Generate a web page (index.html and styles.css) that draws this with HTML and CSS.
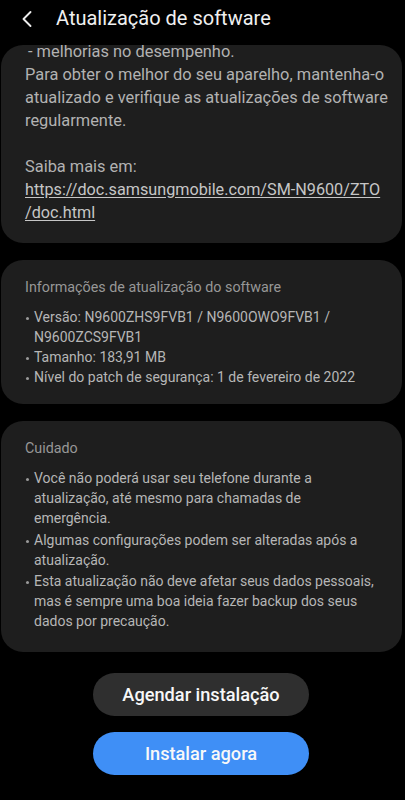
FILE: index.html
```html
<!DOCTYPE html>
<html lang="pt-BR">
<head>
<meta charset="utf-8">
<title>Atualização de software</title>
<link rel="stylesheet" href="styles.css">
</head>
<body>
<div class="screen">
  <header class="appbar">
    <span class="back" aria-label="Voltar">
      <svg width="12" height="18" viewBox="0 0 12 18"><path d="M9.5 2 L2.5 9 L9.5 16" fill="none" stroke="#ececec" stroke-width="1.9" stroke-linecap="round" stroke-linejoin="round"/></svg>
    </span>
    <h1 class="title">Atualização de software</h1>
  </header>

  <main class="content">
    <section class="card card-notes">
      <p class="notes-first">- melhorias no desempenho.</p>
      <p>Para obter o melhor do seu aparelho, mantenha-o atualizado e verifique as atualizações de software regularmente.</p>
      <p class="notes-gap">Saiba mais em:<br><a class="link" href="#">https://doc.samsungmobile.com/SM-N9600/ZTO<br>/doc.html</a></p>
    </section>

    <section class="card card-info">
      <h2 class="card-title">Informações de atualização do software</h2>
      <ul class="bullets">
        <li>Versão: N9600ZHS9FVB1 / N9600OWO9FVB1 / N9600ZCS9FVB1</li>
        <li>Tamanho: 183,91 MB</li>
        <li>Nível do patch de segurança: 1 de fevereiro de 2022</li>
      </ul>
    </section>

    <section class="card card-warn">
      <h2 class="card-title">Cuidado</h2>
      <ul class="bullets spaced">
        <li>Você não poderá usar seu telefone durante a atualização, até mesmo para chamadas de<br>emergência.</li>
        <li>Algumas configurações podem ser alteradas após a atualização.</li>
        <li>Esta atualização não deve afetar seus dados pessoais, mas é sempre uma boa ideia fazer backup dos seus dados por precaução.</li>
      </ul>
    </section>

    <div class="actions">
      <button class="btn btn-secondary">Agendar instalação</button>
      <button class="btn btn-primary">Instalar agora</button>
    </div>
  </main>
</div>
</body>
</html>
```

FILE: styles.css
```css
* { box-sizing: border-box; }

html, body {
  margin: 0;
  padding: 0;
  background: #000;
}

body {
  font-family: Roboto, "Noto Sans", "Liberation Sans", sans-serif;
  color: #b4b4b4;
  width: 405px;
  height: 800px;
  overflow: hidden;
}

.screen {
  display: flex;
  flex-direction: column;
  height: 800px;
}

.appbar {
  height: 45px;
  display: flex;
  align-items: flex-start;
  padding-left: 21px;
  background: #000;
}

.back {
  display: flex;
  width: 35px;
  padding-top: 10px;
}

.title {
  margin: 0;
  padding-top: 5px;
  font-size: 20px;
  font-weight: 400;
  line-height: 26px;
  color: #f0f0f0;
  letter-spacing: 0;
}

.content {
  display: flex;
  flex-direction: column;
  padding: 0 3px 0 1px;
}

.card {
  background: #1e1e1e;
  border-radius: 22px;
  overflow: hidden;
}

.card + .card { margin-top: 17px; }

.card-notes {
  height: 198px;
  padding: 0 14px 0 24px;
  font-size: 16.4px;
  line-height: 23px;
  color: #b2b2b2;
}

.card-notes p { margin: 0; }

.notes-first {
  margin-top: -5px !important;
  padding-left: 3px;
}

.notes-gap { margin-top: 23px !important; }

.link {
  color: #c6c6c6;
  font-size: 16.2px;
  text-decoration: underline;
  text-underline-offset: 2px;
}

.card-info {
  height: 144px;
  padding: 17px 18px 0 24px;
}

.card-warn {
  height: 231px;
  padding: 17px 16px 0 24px;
}

.card-title {
  margin: 0 0 10px;
  font-size: 14.3px;
  font-weight: 400;
  line-height: 20px;
  color: #979797;
}

.bullets {
  margin: 0;
  padding: 0;
  list-style: none;
  font-size: 14px;
  line-height: 20px;
  color: #b6b6b6;
}

.bullets li {
  display: flex;
}

.bullets li::before {
  content: "";
  flex: 0 0 3px;
  width: 3px;
  height: 3px;
  margin: 10px 5px 0 1px;
  border-radius: 50%;
  background: #9a9a9a;
}

.bullets.spaced li + li { margin-top: 1.5px; }

.actions {
  display: flex;
  flex-direction: column;
  align-items: center;
  gap: 16px;
  margin-top: 21px;
  padding-right: 1px;
}

.btn {
  width: 216px;
  height: 43px;
  border: 0;
  border-radius: 22px;
  font-family: Roboto, "Noto Sans", "Liberation Sans", sans-serif;
  font-size: 18.2px;
  font-weight: 500;
  color: #f8f8f8;
  padding: 0;
}

.btn-secondary { background: #2f2f2f; }
.btn-primary { background: #3f8ff6; }
```
